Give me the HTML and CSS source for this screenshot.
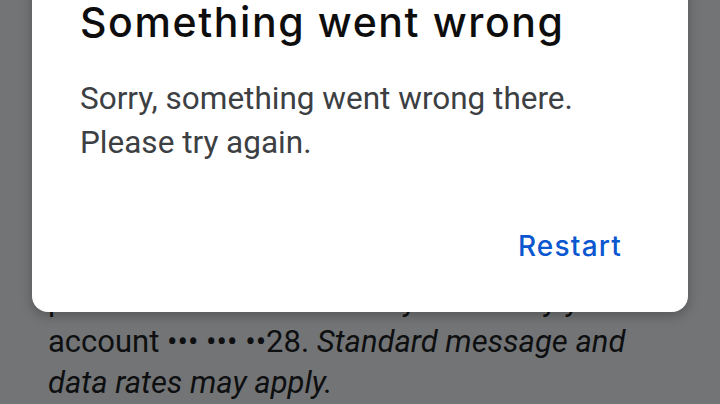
FILE: index.html
```html
<!DOCTYPE html>
<html>
<head>
<meta charset="utf-8">
<link rel="stylesheet" href="styles.css">
</head>
<body>
<main class="page">
  <p class="terms">phone number so that they can verify your<br>account ••• ••• ••28. <em>Standard message and<br>data rates may apply.</em></p>
</main>
<div class="dialog" role="alertdialog">
  <h1 class="title">Something went wrong</h1>
  <p class="message">Sorry, something went wrong there.<br>Please try again.</p>
  <div class="actions"><button class="btn">Restart</button></div>
</div>
</body>
</html>
```
FILE: styles.css
```css
html, body {
  margin: 0;
  padding: 0;
  width: 720px;
  height: 404px;
  overflow: hidden;
  background: #737476;
}
.page {
  padding: 280px 0 0 48px;
}
.terms {
  margin: 0;
  white-space: nowrap;
  font-family: Roboto, "Liberation Sans", sans-serif;
  font-size: 31px;
  line-height: 41px;
  color: #0e0f10;
}
.terms em { font-style: italic; }
.dialog {
  position: absolute;
  left: 32px;
  top: -40px;
  width: 656px;
  height: 352px;
  background: #ffffff;
  border-radius: 16px;
  box-shadow: 0 4px 12px rgba(0,0,0,0.25);
  box-sizing: border-box;
  padding: 40px 48px 0 48px;
  display: flex;
  flex-direction: column;
}
.title {
  margin: 0;
  font-family: Inter, "Open Sans", sans-serif;
  font-weight: 500;
  font-size: 41px;
  letter-spacing: 1.6px;
  line-height: 44px;
  color: #0d0d0d;
}
.message {
  margin: 33px 0 0 0;
  font-family: Roboto, "Liberation Sans", sans-serif;
  font-size: 31.5px;
  line-height: 44px;
  color: #3c4043;
}
.actions {
  display: flex;
  justify-content: flex-end;
  margin-top: 64px;
}
.btn {
  border: 0;
  background: none;
  padding: 0;
  margin-right: 18px;
  font-family: Inter, "Open Sans", sans-serif;
  font-weight: 500;
  font-size: 28px;
  line-height: 34px;
  letter-spacing: 1.2px;
  color: #0b57d0;
}
```
